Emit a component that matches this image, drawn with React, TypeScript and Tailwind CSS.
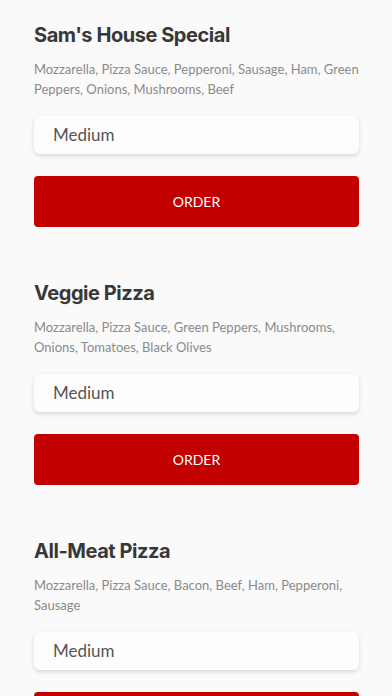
import React from "react";

const items = [
  {
    name: "Sam's House Special",
    desc: "Mozzarella, Pizza Sauce, Pepperoni, Sausage, Ham, Green Peppers, Onions, Mushrooms, Beef",
  },
  {
    name: "Veggie Pizza",
    desc: "Mozzarella, Pizza Sauce, Green Peppers, Mushrooms, Onions, Tomatoes, Black Olives",
  },
  {
    name: "All-Meat Pizza",
    desc: "Mozzarella, Pizza Sauce, Bacon, Beef, Ham, Pepperoni, Sausage",
  },
];

export default function App() {
  return (
    <div className="h-[696px] w-[392px] overflow-hidden bg-[#fafafa] font-['Lato',sans-serif]">
      <div className="flex flex-col gap-[54px] pl-[34px] pr-[33px] pt-[23px]">
        {items.map((it) => (
          <section key={it.name} className="flex flex-col">
            <h2 className="font-['Inter',sans-serif] text-[20px] font-bold leading-[24px] tracking-[-0.45px] text-[#383838]">
              {it.name}
            </h2>
            <p className="mt-[13px] text-[13px] leading-[19.5px] text-[#8a8a8a]">{it.desc}</p>
            <div className="mt-[17px] flex h-[38px] items-center rounded-[6px] bg-[#fdfdfd] pl-[19px] text-[17px] text-[#555555] shadow-[0_2px_4px_rgba(0,0,0,0.14)]">
              Medium
            </div>
            <button className="mt-[22px] flex h-[51px] items-center justify-center rounded-[4px] bg-[#c20000] text-[14px] text-white">
              ORDER
            </button>
          </section>
        ))}
      </div>
    </div>
  );
}
